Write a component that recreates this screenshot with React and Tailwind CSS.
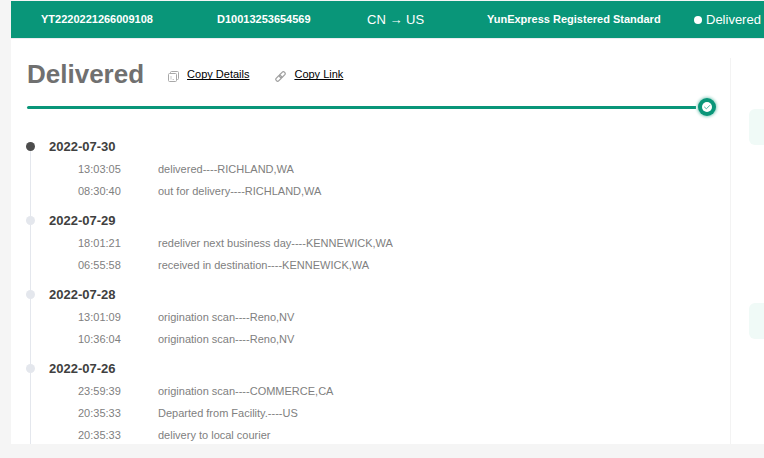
import { useState } from 'react'

const shipment = {
  number: 'YT2220221266009108',
  reference: 'D10013253654569',
  route: 'CN → US',
  service: 'YunExpress Registered Standard',
  status: 'Delivered'
}

const history = [
  {
    date: '2022-07-30',
    events: [
      { time: '13:03:05', text: 'delivered----RICHLAND,WA' },
      { time: '08:30:40', text: 'out for delivery----RICHLAND,WA' }
    ]
  },
  {
    date: '2022-07-29',
    events: [
      { time: '18:01:21', text: 'redeliver next business day----KENNEWICK,WA' },
      { time: '06:55:58', text: 'received in destination----KENNEWICK,WA' }
    ]
  },
  {
    date: '2022-07-28',
    events: [
      { time: '13:01:09', text: 'origination scan----Reno,NV' },
      { time: '10:36:04', text: 'origination scan----Reno,NV' }
    ]
  },
  {
    date: '2022-07-26',
    events: [
      { time: '23:59:39', text: 'origination scan----COMMERCE,CA' },
      { time: '20:35:33', text: 'Departed from Facility.----US' },
      { time: '20:35:33', text: 'delivery to local courier' }
    ]
  }
]

function CopyIcon() {
  return (
    <svg viewBox="0 0 11 11" className="mt-1 size-[11px]" fill="none" stroke="#a8a8a8">
      <path d="M2.5 2.5V1.5Q2.5 .5 3.5 .5H9.5Q10.5 .5 10.5 1.5V7.5Q10.5 8.5 9.5 8.5H8.5" />
      <rect x=".5" y="2.5" width="8" height="8" rx="1" />
      <path d="M3 5V8.5M4.5 8.5H6" stroke="#c8c8c8" />
    </svg>
  )
}

function LinkIcon() {
  return (
    <svg viewBox="0 0 11 11" className="mt-1 size-[11px]" fill="none" stroke="#a0a0a0" strokeWidth="1.2">
      <rect x="-3.3" y="-1.8" width="6.6" height="3.6" rx="1.8" transform="translate(7.3 3.7) rotate(-45)" />
      <rect x="-3.3" y="-1.8" width="6.6" height="3.6" rx="1.8" transform="translate(3.7 7.3) rotate(-45)" />
    </svg>
  )
}

function CopyAction({ icon, label, value }) {
  function handleCopy() {
    navigator.clipboard?.writeText(value)
  }

  return (
    <button
      type="button"
      onClick={handleCopy}
      className="flex cursor-pointer items-center gap-2 text-[11px] leading-4 text-black"
    >
      {icon}
      <span className="underline [text-decoration-skip-ink:none]">{label}</span>
    </button>
  )
}

function Progress() {
  return (
    <div className="mt-2 flex items-center">
      <div className="h-[3px] flex-1 rounded-l-full bg-[#099679]" />
      <div className="ml-0.5 flex size-[18px] items-center justify-center rounded-full bg-[#099679] shadow-[0_0_3px_1px_#8fd0c2]">
        <svg viewBox="0 0 10 10" className="size-[10px]" fill="none">
          <circle cx="5" cy="5" r="5" fill="#fff" />
          <path d="M2.2 4.8L4.4 6.8L8 3.2" stroke="#4fb3a0" />
        </svg>
      </div>
    </div>
  )
}

function Day({ day, current }) {
  return (
    <li className="group flex gap-[14px]">
      <div className="-ml-px flex w-[9px] flex-col items-center">
        <div className={`h-2 w-px ${current ? 'bg-white' : 'bg-[#e4e7ed]'}`} />
        <div
          className={`size-[9px] rounded-full ${current ? 'bg-[#4d4d4d]' : 'bg-[#e4e7ed]'}`}
        />
        <div className="w-px flex-1 bg-[#e4e7ed]" />
      </div>
      <div className="flex-1 pb-2 group-last:pb-0">
        <h2 className="text-[13px] leading-[26px] font-bold text-[#404040]">{day.date}</h2>
        <ul className="flex flex-col gap-1 pl-[29px] text-[11px] leading-[18px] text-[#808080]">
          {day.events.map((event, index) => (
            <li key={index} className="flex">
              <time className="w-20">{event.time}</time>
              <span>{event.text}</span>
            </li>
          ))}
        </ul>
      </div>
    </li>
  )
}

export default function App() {
  const [days] = useState(history)

  return (
    <div className="min-h-screen bg-[#f5f5f5] pt-px pl-[11px] font-['Liberation_Sans',Arial,sans-serif]">
      <header className="grid h-[37px] grid-cols-[176fr_150fr_120fr_207fr_70fr] items-center bg-[#099679] pl-[30px] text-[11px] font-bold whitespace-nowrap text-white">
        <span>{shipment.number}</span>
        <span>{shipment.reference}</span>
        <span className="text-[13px] font-normal">{shipment.route}</span>
        <span>{shipment.service}</span>
        <span className="flex items-center gap-1 text-[13px] font-normal">
          <i className="size-2 rounded-full bg-white" />
          {shipment.status}
        </span>
      </header>

      <main className="flex border-t border-[#ececf0] bg-white pt-[19px]">
        <section className="flex-1 pr-[14px] pl-4">
          <div className="flex items-center gap-6">
            <h1 className="text-[26px] leading-8 font-bold text-[#707070]">{shipment.status}</h1>
            <div className="flex gap-[26px]">
              <CopyAction icon={<CopyIcon />} label="Copy Details" value={JSON.stringify(days)} />
              <CopyAction icon={<LinkIcon />} label="Copy Link" value={window.location.href} />
            </div>
          </div>
          <Progress />
          <ol className="mt-[18px]">
            {days.map((day, index) => (
              <Day key={day.date} day={day} current={index === 0} />
            ))}
          </ol>
        </section>

        <aside className="w-[34px] border-l border-[#f3f3f3] pt-[51px] pl-[18px]">
          <div className="h-9 rounded-l-md bg-[#f0faf7]" />
          <div className="mt-[158px] h-9 rounded-l-md bg-[#f0faf7]" />
        </aside>
      </main>
    </div>
  )
}
